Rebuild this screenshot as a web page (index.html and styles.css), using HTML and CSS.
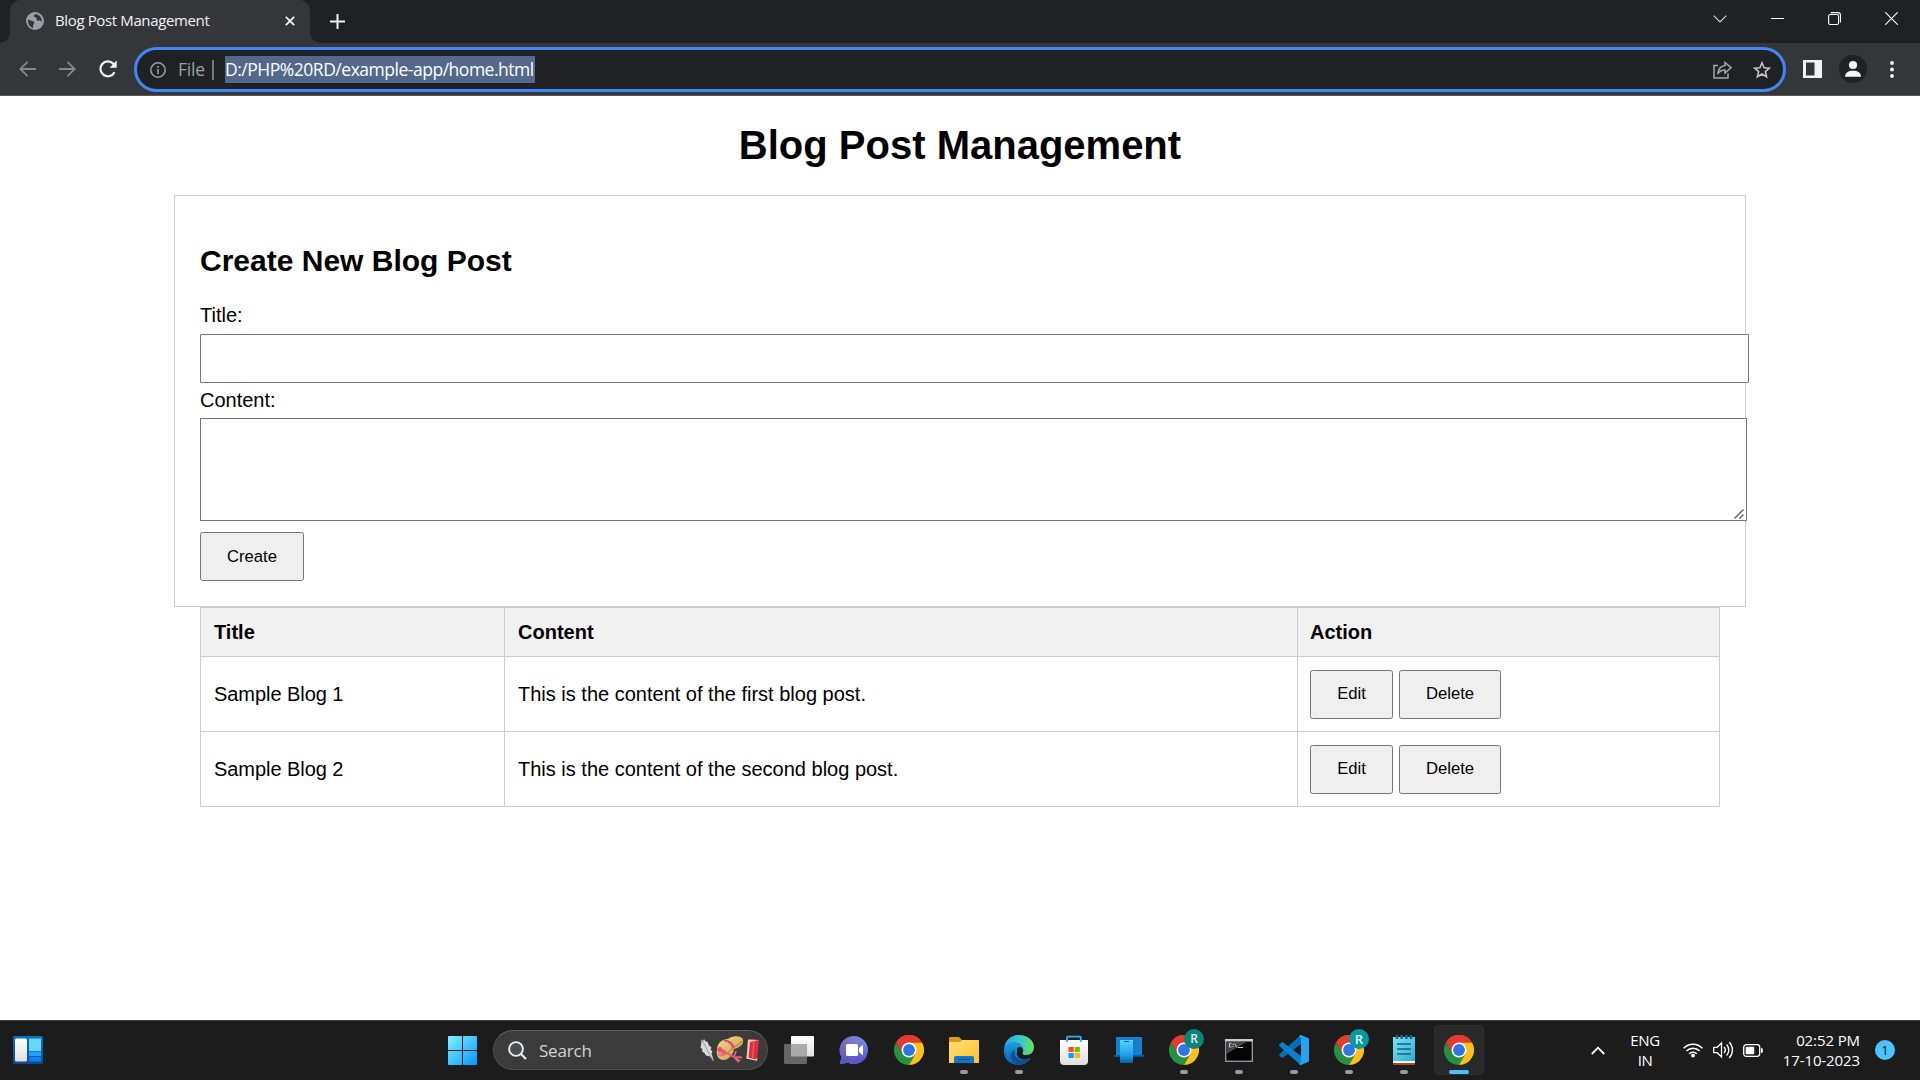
FILE: index.html
```html
<!DOCTYPE html>
<html lang="en">
<head>
<meta charset="utf-8">
<title>Blog Post Management</title>
<link rel="stylesheet" href="styles.css">
</head>
<body>
<svg width="0" height="0" class="defs">
  <defs>
    <linearGradient id="gStart" x1="0" y1="0" x2="1" y2="1"><stop offset="0" stop-color="#7df3ff"/><stop offset="1" stop-color="#0794ff"/></linearGradient>
    <linearGradient id="gWid" x1="0" y1="0" x2="0" y2="1"><stop offset="0" stop-color="#0a73c7"/><stop offset="1" stop-color="#0c4a91"/></linearGradient>
    <linearGradient id="gWhite" x1="0" y1="0" x2="0" y2="1"><stop offset="0" stop-color="#fff"/><stop offset="1" stop-color="#dfdfdf"/></linearGradient>
    <linearGradient id="gChat" x1="0" y1="0" x2="1" y2="0"><stop offset="0" stop-color="#8a64b4"/><stop offset="1" stop-color="#6a8de8"/></linearGradient>
    <linearGradient id="gChat2" x1="0" y1="0" x2="0" y2="1"><stop offset=".2" stop-color="#5b5fc7" stop-opacity="0"/><stop offset=".85" stop-color="#5b57c9"/></linearGradient>
    <linearGradient id="gFolder" x1="0" y1="0" x2="1" y2="1"><stop offset="0" stop-color="#ffe07a"/><stop offset="1" stop-color="#fdc02a"/></linearGradient>
    <linearGradient id="gEdgeA" x1="0" y1="0" x2="1" y2="0"><stop offset="0" stop-color="#2aa5e0"/><stop offset=".55" stop-color="#36c6d3"/><stop offset="1" stop-color="#6ae24f"/></linearGradient>
    <linearGradient id="gEdgeB" x1="0" y1="0" x2="0" y2="1"><stop offset="0" stop-color="#1b9de2"/><stop offset="1" stop-color="#0b5fae"/></linearGradient>
    <linearGradient id="gPhone" x1="0" y1="0" x2="0" y2="1"><stop offset="0" stop-color="#55d5ff"/><stop offset=".7" stop-color="#1a9be6"/><stop offset="1" stop-color="#0c5ba0"/></linearGradient>
    <linearGradient id="gNote" x1="0" y1="0" x2="1" y2="1"><stop offset="0" stop-color="#7be4f6"/><stop offset="1" stop-color="#35a9cf"/></linearGradient>
    <linearGradient id="gHat" x1="0" y1="0" x2="1" y2="1"><stop offset="0" stop-color="#f8da96"/><stop offset="1" stop-color="#cf9340"/></linearGradient>
    <symbol id="chrome" viewBox="0 0 48 48">
      <path fill="#e33b2e" d="M24 24 3.200 12A24 24 0 0 1 44.800 12Z"/>
      <path fill="#249243" d="M24 24 34.400 30 24 48A24 24 0 0 1 3.200 12L13.600 30Z"/>
      <path fill="#fbc116" d="M24 12H44.800A24 24 0 0 1 24 48L34.400 30Z"/>
      <path fill="#e33b2e" d="M3.200 12 13.600 30 24 24V12H44.800A24 24 0 0 0 3.200 12Z"/>
      <circle cx="24" cy="24" r="12" fill="#fff"/><circle cx="24" cy="24" r="9.500" fill="#2f76e8"/>
    </symbol>
  </defs>
</svg>

<header class="browser">
  <div class="tabstrip">
    <div class="tab">
      <svg class="globe" width="18" height="18" viewBox="0 0 18 18"><circle cx="9" cy="9" r="9" fill="#9aa0a6"/><path d="M2 7.500c1.600 1 3.500.8 5 1.700 1.500.9 1.900 1.500.9 2.500-.7.8-.9 1.700-.9 4.300-3.300-1-5.500-4.200-5-8.500ZM9.500 2c-1.500 1-1.900 1.800-1.500 2.600.6 1 1.800.6 2.400 1.600.4 1-.2 1.600.8 2.200 1.200.6 2.200-.2 3.400.4.700.5.8 1.200.7 2 1.500-3.600-.7-8-5.800-8.800Z" fill="#35363a"/></svg>
      <span class="tab-title">Blog Post Management</span>
      <svg class="tab-close" width="10" height="10" viewBox="0 0 10 10"><path d="M.8.8 9.200 9.200M9.200.8.8 9.200" stroke="#f1f3f4" stroke-width="1.800"/></svg>
    </div>
    <svg class="plus" width="15" height="15" viewBox="0 0 15 15"><path d="M7.500 0v15M0 7.500h15" stroke="#f1f3f4" stroke-width="2"/></svg>
    <div class="win">
      <svg width="14" height="8" viewBox="0 0 14 8"><path d="m.7.7 6.300 6.300 6.300-6.300" fill="none" stroke="#d5d6d8" stroke-width="1.100"/></svg>
      <svg width="13" height="13" viewBox="0 0 13 13"><path d="M0 6.500h13" stroke="#fff"/></svg>
      <svg width="13" height="13" viewBox="0 0 13 13"><rect x=".6" y="2.500" width="10" height="10" rx="1.800" fill="none" stroke="#fff" stroke-width="1.100"/><path d="M2.700.6h7.300a2.500 2.500 0 0 1 2.500 2.500v7.300" fill="none" stroke="#fff" stroke-width="1.100"/></svg>
      <svg width="13" height="13" viewBox="0 0 13 13"><path d="m.3.3 12.400 12.400M12.700.3.3 12.700" stroke="#fff" stroke-width="1.100"/></svg>
    </div>
  </div>
  <div class="toolbar">
    <div class="nav">
      <svg width="17" height="16" viewBox="0 0 17 16"><path d="M17 8H1.500M8.500.8 1.300 8l7.200 7.200" fill="none" stroke="#85878a" stroke-width="1.800"/></svg>
      <svg width="17" height="16" viewBox="0 0 17 16"><path d="M0 8h15.500M8.500.8 15.700 8l-7.200 7.200" fill="none" stroke="#85878a" stroke-width="1.800"/></svg>
      <svg width="18" height="18" viewBox="0 0 18 18"><path d="M15.500 12.200A7.400 7.400 0 1 1 14.300 3.800L16 5.500" fill="none" stroke="#f1f3f4" stroke-width="2.200"/><path d="M17.700.6V7.800H10.500Z" fill="#f1f3f4"/></svg>
    </div>
    <div class="omnibox">
      <svg class="info" width="16" height="16" viewBox="0 0 16 16"><circle cx="8" cy="8" r="7.200" fill="none" stroke="#9aa0a6" stroke-width="1.500"/><path d="M8 7v5M8 4v1.700" stroke="#9aa0a6" stroke-width="1.600"/></svg>
      <span class="scheme">File</span><span class="sep"></span><span class="url">D:/PHP%20RD/example-app/home.html</span>
      <svg class="share" width="19" height="18" viewBox="0 0 19 18"><path d="M5 4.500H1V17h14v-4.500" fill="none" stroke="#a5a8ac" stroke-width="1.500"/><path d="M12 1.500 18 6.700 12 12V9C8.500 9 6.500 10.200 4.700 13 5.200 8.500 8 5.200 12 4.600Z" fill="none" stroke="#a5a8ac" stroke-width="1.500"/></svg>
      <svg class="star" width="18" height="18" viewBox="0 0 18 18"><path d="m9 1.800 2.100 4.900 5.300.4-4 3.500 1.200 5.200L9 13 4.400 15.800l1.200-5.200-4-3.500 5.300-.4Z" fill="none" stroke="#c2c4c7" stroke-width="1.600"/></svg>
    </div>
    <div class="tools">
      <svg width="19" height="18" viewBox="0 0 19 18"><path fill="#f1f3f4" fill-rule="evenodd" d="M0 0h19v18H0ZM3 2.500v13h8.500v-13Z"/></svg>
      <svg width="28" height="28" viewBox="0 0 28 28"><circle cx="14" cy="14" r="14" fill="#202124"/><circle cx="14" cy="10" r="4.100" fill="#f5f6f7"/><path d="M6 21.800c0-4.200 3.500-6 8-6s8 1.800 8 6Z" fill="#f5f6f7"/></svg>
      <svg width="4" height="17" viewBox="0 0 4 17"><g fill="#f1f3f4"><circle cx="2" cy="2" r="1.900"/><circle cx="2" cy="8.500" r="1.900"/><circle cx="2" cy="15" r="1.900"/></g></svg>
    </div>
  </div>
</header>

<main class="page">
  <h1>Blog Post Management</h1>
  <form class="form">
    <h2>Create New Blog Post</h2>
    <label for="t">Title:</label>
    <input id="t" class="field title-field" type="text">
    <label for="c" class="content-label">Content:</label>
    <div class="area">
      <textarea id="c" class="field content-field"></textarea>
      <svg class="grip" width="10" height="10" viewBox="0 0 10 10"><path d="M.5 9.500 9.500.5M5.500 9.500l4-4" stroke="#555" stroke-width="1.300"/></svg>
    </div>
    <button type="button" class="btn create">Create</button>
  </form>
  <table class="posts">
    <colgroup><col class="c1"><col class="c2"><col class="c3"></colgroup>
    <tr class="head"><th>Title</th><th>Content</th><th>Action</th></tr>
    <tr><td>Sample Blog 1</td><td>This is the content of the first blog post.</td><td><div class="actions"><button class="btn edit">Edit</button><button class="btn delete">Delete</button></div></td></tr>
    <tr><td>Sample Blog 2</td><td>This is the content of the second blog post.</td><td><div class="actions"><button class="btn edit">Edit</button><button class="btn delete">Delete</button></div></td></tr>
  </table>
</main>

<footer class="taskbar">
  <svg class="widgets" width="30" height="28" viewBox="0 0 30 28"><rect width="30" height="28" rx="1.500" fill="url(#gWid)"/><rect x="2" y="2.500" width="12" height="23" rx="1.500" fill="url(#gWhite)"/><path fill="#68d6ff" d="M16 2.500h12V15H16z"/><path fill="#1fa4fb" d="M16 15.500h12V20H16z"/><path fill="#0883ec" d="M16 20.800h12v4.700H16z"/></svg>
  <svg class="start" width="29" height="29" viewBox="0 0 29 29"><path fill="url(#gStart)" d="M1 0h13v14H0V1Q0 0 1 0ZM15 0h13q1 0 1 1v13H15ZM0 15h14v14H1q-1 0-1-1ZM15 15h14v13q0 1-1 1H15Z"/></svg>
  <div class="search">
    <svg width="19" height="19" viewBox="0 0 19 19"><circle cx="8" cy="8" r="6.900" fill="#4a4d50" stroke="#e8eef2" stroke-width="1.900"/><path d="m13 13 5 5" stroke="#e8eef2" stroke-width="2.200"/></svg>
    <span>Search</span>
    <svg class="doodle" width="60" height="28" viewBox="0 0 60 28">
      <path d="M1.500 3.500 3 5l1-2 2 3 1-1 2 4.500 2.500 2-1 2 2 2-1 2 2.500 8-4-5-4-1-1.500-2.500-2.500-1.500.5-2-2-2 .5-2Z" fill="#d6d8da"/><path d="m2.500 5 10.500 20" stroke="#8d9094" stroke-width=".8"/>
      <path d="M17 14C17 8 21 3 28 3c4-3.500 12-3.500 14.500-.5C45 7 40 12 34 13c-1 6-5 11-11 11-5-.5-7-5-6-10Z" fill="url(#gHat)"/>
      <path d="M20 20c6-1 11-5 13-9 4-1 7-3 9-6" fill="none" stroke="#a96f2a" stroke-width="1"/>
      <path d="M24 4.500c5 0 9 3.500 9.500 8" fill="none" stroke="#d9486a" stroke-width="2.200"/>
      <circle cx="20" cy="13.500" r="2.600" fill="#e94f72"/><circle cx="23.500" cy="16" r="2.400" fill="#e4607b"/><circle cx="20" cy="18" r="2.200" fill="#f07d92"/>
      <path d="m25 16 7 4 8 5M36 15l-2 6 8 .5M34 21l5 5" fill="none" stroke="#e75b7b" stroke-width="1.900"/>
      <path d="m48 3.500 11 .5-2 20-10-2Z" fill="#e12d3b"/><path d="m48 3.500-1.500 18.500 2 .5L50 6l9-2Z" fill="#f6c9b5"/><path d="m46.500 22 10 2.200.5-1.700" stroke="#fff" fill="none"/><path d="m54 5-1.500 17.500" stroke="#f0606c" stroke-width="1.200"/>
    </svg>
  </div>
  <div class="apps">
    <div class="app"><svg width="30" height="28" viewBox="0 0 30 28"><rect x="7" width="23" height="20.500" rx="1" fill="url(#gWhite)"/><rect y="8" width="23" height="20" rx="1" fill="#666"/><rect x="7" y="8" width="16" height="12.500" fill="#aaa"/></svg></div>
    <div class="app"><svg width="30" height="30" viewBox="0 0 30 30"><path fill="url(#gChat)" d="M15 1A14 14 0 1 1 9 27.700L1.500 29 1 28l1.500-6A14 14 0 0 1 15 1Z"/><path fill="url(#gChat2)" d="M15 1A14 14 0 1 1 9 27.700L1.500 29 1 28l1.500-6A14 14 0 0 1 15 1Z"/><rect x="7" y="9" width="12" height="12" rx="1.500" fill="#fff"/><path fill="#fff" d="m20 13 4-3.500v11L20 17Z"/></svg></div>
    <div class="app"><svg width="30" height="30"><use href="#chrome"/></svg></div>
    <div class="app run"><svg width="30" height="30" viewBox="0 0 30 30"><path fill="#d99e0b" d="M0 3q0-1 1-1h9l3 3v4H0Z"/><path fill="url(#gFolder)" d="M0 7h11l2-2h16q1 0 1 1v22H0Z"/><path fill="#0f78cb" d="M5 28v-5q0-2 2-2h16q2 0 2 2v5Z"/><path d="M9 24.500h12" stroke="#0a4f92" stroke-width="1.200"/></svg></div>
    <div class="app run"><svg width="30" height="30" viewBox="0 0 30 30"><path fill="url(#gEdgeB)" d="M0 14C2 8 8 6 13 8c4 1 6 4 6 7-2-3-6-2-6 3 0 6 7 8 14 5-5 7-12 8-18 6C3 27-1 21 0 14Z"/><path fill="#114f92" d="M11 14c-2 5 1 11 8 11 4 0 7-2 8-2-5 7-11 7-14 6.500-8-3-8-12-2-15.500Z"/><path fill="url(#gEdgeA)" d="M0 14C1 5 7 0 15 0c9 0 15 6 15 12 0 5-3 8-8 8-3 0-4-1-3.500-2 2-3 0-7-3-9C10 5.500 2 8 0 14Z"/><path fill="#1c1c1c" d="M15.500 12c2 0 3.500 1.500 3.500 3.300 0 1.500-1.500 2.200-.500 4-3-.5-6-2-5.500-4.800.2-1.500 1.200-2.500 2.500-2.500Z"/></svg></div>
    <div class="app"><svg width="30" height="30" viewBox="0 0 30 30"><path d="M8 7V2.500q0-.8.800-.8H21q.8 0 .8.800V7" fill="none" stroke="#25b3ec" stroke-width="1.800"/><path fill="url(#gWhite)" d="M1 5h28v21q0 4-4 4H5q-4 0-4-4Z"/><path d="M8 4v3M21.800 4v3" stroke="#25b3ec" stroke-width="1.800"/><path fill="#f25022" d="M9.500 12h5.200v5H9.500z"/><path fill="#7fba00" d="M15.700 12h5.200v5h-5.200z"/><path fill="#00a4ef" d="M9.500 18h5.200v5H9.500z"/><path fill="#ffb900" d="M15.700 18h5.200v5h-5.200z"/></svg></div>
    <div class="app"><svg width="30" height="30" viewBox="0 0 30 30"><path fill="#137fd0" d="M2 2h26v19H2z"/><path fill="#0b5da5" d="M0 20h30v1.800H0z"/><rect x="6" y="5" width="13" height="23" fill="url(#gPhone)"/><path d="M10 6.500h5" stroke="#0b5da5"/></svg></div>
    <div class="app run"><svg width="30" height="30"><use href="#chrome"/></svg><b class="badge">R</b></div>
    <div class="app run"><svg width="28" height="23" viewBox="0 0 28 23"><rect x=".7" y=".7" width="26.600" height="21.600" fill="#050505" stroke="#8e9299" stroke-width="1.400"/><path fill="#c9ccd1" d="M0 0h28v2.500H0z"/><path fill="#444" d="M1.500 3h20L1.500 15Z"/><path d="M6.500 4.500h-2v3.500h2M8 5v1M8 7v1M9.500 4.500l2.500 4M13 8.500h5" stroke="#ddd" fill="none" stroke-width=".9"/></svg></div>
    <div class="app run"><svg width="30" height="30" viewBox="0 0 30 30"><path fill="#0a6cb5" d="M22 0v9L3.500 23 .3 20.800V19.200L21 .4Z"/><path fill="#0b80cf" d="M.3 9.200 3.500 7 22 21v9l-1-.4L.3 11Z"/><path fill="#27a3f3" d="M22 0 30 3.500v23L22 30q-1.500 0-2-1.500l2-1V2.800l-2-1Q20.500 0 22 0Z"/></svg></div>
    <div class="app run"><svg width="30" height="30"><use href="#chrome"/></svg><b class="badge bright">R</b></div>
    <div class="app run"><svg width="22" height="30" viewBox="0 0 22 30"><path fill="#a34b12" d="M0 24h22v6H0z"/><path fill="#f2f2ee" d="M0 24h22v4H0z"/><path fill="url(#gNote)" d="M0 2h22v24H0z"/><path d="M4 9h14M4 14h14M4 19h14" stroke="#08678b" stroke-width="1.700"/><path d="M4 0v4M8.700 0v4M13.400 0v4M18 0v4" stroke="#12698b" stroke-width="2.500"/></svg></div>
    <div class="app run active"><svg width="30" height="30"><use href="#chrome"/></svg></div>
  </div>
  <div class="tray">
    <svg class="caret" width="14" height="9" viewBox="0 0 14 9"><path d="m.8 8 6.200-6.300L13.200 8" fill="none" stroke="#fff" stroke-width="1.800"/></svg>
    <div class="lang">ENG<br>IN</div>
    <svg class="wifi" width="20" height="16" viewBox="0 0 20 16"><g fill="none" stroke="#fff" stroke-width="1.500"><path d="M.6 6.200a13 13 0 0 1 18.800 0M3.400 9a9.300 9.300 0 0 1 13.200 0M6.200 11.800a5.400 5.400 0 0 1 7.600 0"/></g><circle cx="10" cy="13.600" r="1.900" fill="#fff"/></svg>
    <svg class="vol" width="21" height="18" viewBox="0 0 21 18"><g fill="none" stroke="#fff" stroke-width="1.300"><path d="M.7 6.300h3.500L8.500 2v14l-4.300-4.300H.7ZM11 6a4.500 4.500 0 0 1 0 6M13.600 3.500a8 8 0 0 1 0 11M16.200 1a11.500 11.500 0 0 1 0 16"/></g></svg>
    <svg class="bat" width="20" height="13" viewBox="0 0 20 13"><rect x=".7" y=".7" width="16" height="11.600" rx="2.500" fill="none" stroke="#fff" stroke-width="1.300"/><rect x="2.700" y="2.700" width="8.500" height="7.600" rx=".8" fill="#fff"/><path d="M18 4.300h1q.8 0 .8.800v2.800q0 .8-.8.800h-1Z" fill="#fff"/></svg>
    <div class="clock">02:52 PM<br>17-10-2023</div>
    <div class="count">1</div>
  </div>
</footer>
</body>
</html>
```
FILE: styles.css
```css
* { box-sizing: border-box; }
body { margin: 0; width: 1920px; height: 1080px; overflow: hidden; display: flex; flex-direction: column; background: #fff; color: #000; font: 20px/23px "Liberation Sans", Arial, sans-serif; }
svg { display: block; flex: none; }
.defs { position: absolute; }

.browser { height: 96px; flex: none; background: #35363a; border-bottom: 1px solid #54565a; font-family: "Open Sans", "Noto Sans", sans-serif; }
.tabstrip { height: 43px; background: #202124; display: flex; align-items: center; padding-left: 10px; }
.tab { position: relative; width: 300px; height: 43px; background: #35363a; border-radius: 10px 10px 0 0; display: flex; align-items: center; padding: 0 15px 1px 16px; }
.tab::before, .tab::after { content: ""; position: absolute; bottom: 0; width: 10px; height: 10px; }
.tab::before { left: -10px; background: radial-gradient(circle at 0 0, transparent 9.5px, #35363a 10px); }
.tab::after { right: -10px; background: radial-gradient(circle at 100% 0, transparent 9.5px, #35363a 10px); }
.tab-title { margin: 0 0 2px 11px; flex: 1; font-size: 15px; letter-spacing: -.37px; color: #f1f3f4; white-space: nowrap; }
.plus { margin: 0 0 1px 20px; }
.win { margin-left: auto; display: flex; align-items: center; padding: 0 22px 6px 0; gap: 44px; }
.toolbar { height: 52px; display: flex; align-items: center; }
.nav { width: 134px; display: flex; align-items: center; gap: 23px; padding-left: 19px; }
.omnibox { width: 1652px; height: 45px; margin-top: 1px; border: 3px solid #4285f4; border-radius: 23px; background: #202124; display: flex; align-items: center; padding: 0 12px 0 13px; font-size: 17.500px; }
.scheme { margin-left: 12px; width: 34px; color: #9aa0a6; letter-spacing: -.2px; }
.sep { width: 2px; height: 20px; background: #76787b; }
.url { margin-left: 11px; width: 310px; height: 27px; line-height: 26px; background: #54688b; color: #fff; letter-spacing: -.48px; white-space: nowrap; }
.share { margin-left: auto; margin-right: 21px; }
.tools { display: flex; align-items: center; margin-left: 17px; gap: 17px; }
.tools svg:last-child { margin-left: 6px; }

.page { flex: 1; padding-top: 26px; }
h1 { margin: 0 0 27px; height: 46px; font-size: 40px; line-height: 46px; text-align: center; }
.form { width: 1572px; height: 412px; margin: 0 auto; border: 1px solid #ccc; padding: 48px 25px 0; display: flex; flex-direction: column; align-items: flex-start; }
h2 { margin: 0 0 26px; font-size: 30px; line-height: 34px; }
label { height: 23px; margin-bottom: 7px; }
.content-label { margin-bottom: 6px; }
.field { display: block; border: 1px solid #767676; border-radius: 0; padding: 12px; margin: 0; background: #fff; }
.title-field { width: 1549px; height: 49px; flex: none; margin-bottom: 6px; border-radius: 1px; }
.area { position: relative; width: 1547px; height: 103px; flex: none; margin-bottom: 11px; }
.content-field { width: 100%; height: 100%; resize: none; }
.grip { position: absolute; right: 3px; bottom: 2px; }
.btn { height: 49px; padding: 0; border: 1px solid #767676; border-radius: 2.500px; background: #efefef; color: #000; font: 16.670px "Liberation Sans", Arial, sans-serif; }
.create { width: 104px; flex: none; }
.edit { width: 83px; }
.delete { width: 102px; }
.posts { width: 1520px; margin: 0 0 0 200px; border-collapse: collapse; table-layout: fixed; }
.c1 { width: 304px; } .c2 { width: 793px; }
th, td { border: 1px solid #ccc; height: 75px; padding: 0 13px; text-align: left; }
th:last-child, td:last-child { padding-left: 12px; }
td:first-child { letter-spacing: -.05px; }
.head th { height: 49px; background: #f1f1f1; }
.actions { display: flex; gap: 6px; }

.taskbar { height: 60px; flex: none; background: #1c1c1c; border-top: 1px solid #444; padding-bottom: 1px; display: flex; align-items: center; color: #fff; font-family: "Open Sans", "Noto Sans", sans-serif; }
.widgets { margin-left: 13px; }
.start { margin-left: 405px; }
.search { width: 275px; height: 40px; margin-left: 16px; border: 1px solid #505050; border-top-color: #606060; border-radius: 20px; background: #3b3b3b; display: flex; align-items: center; padding: 0 7px 0 14px; font-size: 17px; color: #d3d3d3; }
.search span { margin-left: 12px; letter-spacing: -.2px; }
.doodle { margin-left: auto; }
.apps { display: flex; margin-left: 3px; }
.app { position: relative; width: 55px; height: 50px; display: flex; align-items: center; justify-content: center; }
.run::after { content: ""; position: absolute; left: 23.500px; bottom: 1px; width: 8px; height: 4px; border-radius: 2px; background: #9a9a9a; }
.active { width: 50px; margin-left: 2.500px; background: #292929; border-radius: 5px; box-shadow: inset 0 0 0 1px #303030; }
.active::after { left: 15px; width: 20px; background: #4cc2ff; }
.badge { position: absolute; left: 28px; top: 4px; width: 20px; height: 20px; border-radius: 50%; background: #0a8577; color: #e2f5f1; font-size: 12px; line-height: 20px; text-align: center; font-weight: 600; }
.bright { background: #0c98a0; font-size: 13px; }
.tray { margin-left: auto; display: flex; align-items: center; padding-right: 25px; font-size: 15px; line-height: 20px; white-space: nowrap; }
.lang { width: 50px; margin: 0 1px 1px 15px; text-align: center; letter-spacing: -.4px; }
.wifi { margin-left: 12px; }
.vol { margin-left: 10px; }
.bat { margin-left: 9px; }
.clock { width: 90px; margin: 0 0 1px 7px; text-align: right; letter-spacing: -.1px; }
.count { width: 20px; height: 20px; margin-left: 15px; border-radius: 50%; background: #4cc2ff; color: #10202a; font-size: 13px; line-height: 20px; text-align: center; }
```
